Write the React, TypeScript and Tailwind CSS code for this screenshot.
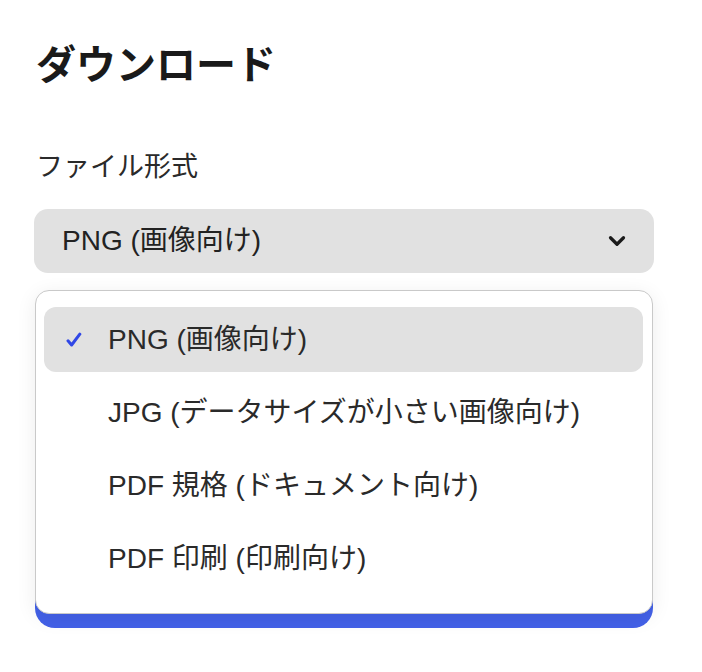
import { ChevronDown } from "lucide-react";

const options = [
  "PNG (画像向け)",
  "JPG (データサイズが小さい画像向け)",
  "PDF 規格 (ドキュメント向け)",
  "PDF 印刷 (印刷向け)",
];

function CheckMark() {
  return (
    <svg width="16" height="16" viewBox="0 0 16 16" fill="none" className="text-[#3047e6]">
      <path
        d="M2 8.8 L5.6 13 L13.8 2.2"
        stroke="currentColor"
        strokeWidth="3"
        strokeLinecap="round"
        strokeLinejoin="round"
      />
    </svg>
  );
}

export default function App() {
  const selected = 0;

  return (
    <div
      className="min-h-[672px] w-[702px] bg-white px-[34px] pt-[41px] text-[#222]"
      style={{ fontFamily: '"Liberation Sans", "Noto Sans CJK JP", sans-serif' }}
    >
      <div className="w-[620px]">
        <h1 className="text-[40px] font-bold leading-[48px] text-[#1a1a1a] pl-[2px]">
          ダウンロード
        </h1>

        <div className="mt-[61px] text-[27px] leading-[34px] text-[#2a2a2a] pl-[2px]">
          ファイル形式
        </div>

        <div className="relative mt-[25px]">
          <button className="flex h-[64px] w-full items-center justify-between rounded-[14px] bg-[#e1e1e1] pl-[28px] pr-[24px] text-[28px] text-[#222]">
            <span>{options[selected]}</span>
            <ChevronDown className="h-[26px] w-[26px] text-[#1a1a1a]" strokeWidth={3} />
          </button>

          <div className="absolute left-[1px] top-[81px] z-10 w-[618px] rounded-[14px] border border-[#c9c9c9] bg-white pb-[22px] pl-[8px] pr-[9px] pt-[16px] shadow-[0_4px_20px_rgba(0,0,0,0.08)]">
            <div className="flex flex-col gap-[8px]">
              {options.map((opt, i) => (
                <div
                  key={opt}
                  className={`flex h-[65px] items-center rounded-[12px] pl-[22px] text-[28px] text-[#2a2a2a] ${
                    i === selected ? "bg-[#e1e1e1]" : ""
                  }`}
                >
                  <span className="flex w-[42px] items-center">
                    {i === selected && <CheckMark />}
                  </span>
                  <span>{opt}</span>
                </div>
              ))}
            </div>
          </div>
        </div>

        <button className="ml-[1px] mt-[299px] h-[56px] w-[618px] rounded-[20px] bg-[#4361e8] text-white" />
      </div>
    </div>
  );
}
